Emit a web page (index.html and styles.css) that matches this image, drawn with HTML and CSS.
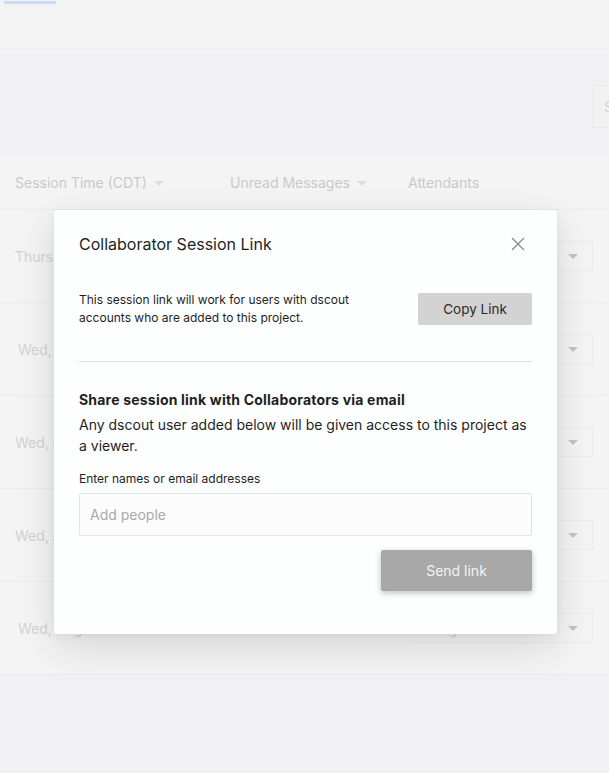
FILE: index.html
```html
<!DOCTYPE html>
<html>

<head>
    <meta charset="UTF-8">
    <title>Sessions</title>
    <link rel="stylesheet" href="styles.css">
</head>

<body>
    <div id="topBar">
        <div class="tab"></div>
    </div>

    <div id="toolBar">
        <button type="button" class="ghostButton">Schedule session</button>
    </div>

    <div id="sessionTable">
        <div class="tableHead">
            <div class="colTime">Session Time (CDT) <span class="caret"></span></div>
            <div class="colUnread">Unread Messages <span class="caret"></span></div>
            <div class="colAttend">Attendants</div>
        </div>
        <div class="tableRow">
            <div class="colTime">Thurs, Aug 15</div>
            <div class="colUnread"></div>
            <div class="colAttend"><div class="select">Assign <span class="caret"></span></div></div>
        </div>
        <div class="tableRow">
            <div class="colTime wed">Wed, July 31</div>
            <div class="colUnread"></div>
            <div class="colAttend"><div class="select">Assign <span class="caret"></span></div></div>
        </div>
        <div class="tableRow">
            <div class="colTime">Wed, Aug 14</div>
            <div class="colUnread"></div>
            <div class="colAttend"><div class="select">Assign <span class="caret"></span></div></div>
        </div>
        <div class="tableRow">
            <div class="colTime">Wed, Aug 14</div>
            <div class="colUnread"></div>
            <div class="colAttend"><div class="select">Assign <span class="caret"></span></div></div>
        </div>
        <div class="tableRow">
            <div class="colTime wed">Wed, Aug 7</div>
            <div class="colUnread"></div>
            <div class="colAttend"><div class="select">Assign <span class="caret"></span></div></div>
        </div>
    </div>

    <div id="linkModal">
        <div class="modalHead">
            <h2>Collaborator Session Link</h2>
            <button type="button" class="closeButton">
                <svg width="14" height="14" viewBox="0 0 14 14">
                    <path d="M1 1L13 13M13 1L1 13" stroke="#8a8a8a" stroke-width="1.3" fill="none"/>
                </svg>
            </button>
        </div>

        <div class="copyRow">
            <p>This session link will work for users with dscout<br>accounts who are added to this project.</p>
            <button type="button" class="copyButton">Copy Link</button>
        </div>

        <hr>

        <h3>Share session link with Collaborators via email</h3>
        <p class="shareText">Any dscout user added below will be given access to this project as a viewer.</p>

        <label for="people">Enter names or email addresses</label>
        <input type="text" id="people" placeholder="Add people">

        <div class="sendRow">
            <button type="button" class="sendButton">Send link</button>
        </div>
    </div>
</body>

</html>
```

FILE: styles.css
```css
body {
    margin: 0;
    position: relative;
    overflow: hidden;
    background-color: #f1f1f3;
    font-family: Inter, "Liberation Sans", Arial, sans-serif;
}

#topBar {
    height: 53px;
    background-color: #f3f3f4;
}

#topBar .tab {
    width: 52px;
    height: 3px;
    margin-left: 4px;
    position: relative;
    top: 1px;
    background-color: #c9dcf4;
}

#toolBar {
    display: flex;
    height: 102px;
    padding-top: 32px;
    box-sizing: border-box;
    background-color: #f1f1f3;
}

.ghostButton {
    margin-left: auto;
    margin-right: -120px;
    width: 136px;
    height: 43px;
    padding: 0 0 0 10px;
    text-align: left;
    border: 1px solid #e9e8e9;
    border-radius: 2px;
    background-color: #f3f2f3;
    color: #d2d2d2;
    font-family: inherit;
    font-size: 14px;
}

#sessionTable {
    background-color: #f4f4f5;
}

.tableHead,
.tableRow {
    display: flex;
    align-items: center;
    border-bottom: 1px solid #ebebed;
    color: #c9c9cb;
    font-size: 14px;
}

.tableHead {
    height: 54px;
}

.tableRow {
    height: 92px;
    color: #d3d3d5;
}

.colTime {
    width: 215px;
    padding-left: 15px;
    white-space: nowrap;
}

.colTime.wed {
    width: 212px;
    padding-left: 18px;
}

.colUnread {
    width: 178px;
}

.colAttend {
    flex: 1;
}

.caret {
    display: inline-block;
    width: 0;
    height: 0;
    margin-left: 3px;
    vertical-align: middle;
    border-left: 5px solid transparent;
    border-right: 5px solid transparent;
    border-top: 5px solid #dcdcde;
}

.select {
    display: flex;
    align-items: center;
    width: 183px;
    height: 30px;
    margin-left: 2px;
    padding: 0 14px 0 10px;
    box-sizing: border-box;
    border: 1px solid #ebebed;
    color: #d3d3d5;
}

.select .caret {
    margin-left: auto;
    border-top-color: #c4c4c6;
}

#linkModal {
    position: absolute;
    top: 210px;
    left: 54px;
    width: 503px;
    height: 424px;
    padding: 24px 25px 0;
    box-sizing: border-box;
    border-radius: 4px;
    background-color: #fdfefe;
    box-shadow: 0 12px 40px rgba(0, 0, 0, 0.13), 0 2px 8px rgba(0, 0, 0, 0.05);
    color: #1f1f1f;
}

.modalHead {
    display: flex;
    align-items: center;
    justify-content: space-between;
    height: 20px;
}

.modalHead h2 {
    margin: 0;
    font-size: 16px;
    font-weight: normal;
    line-height: 20px;
}

.closeButton {
    display: flex;
    margin-right: 7px;
    padding: 0;
    border: none;
    background: none;
}

.copyRow {
    display: flex;
    align-items: center;
    justify-content: space-between;
    margin-top: 37px;
}

.copyRow p {
    margin: 0;
    font-size: 12px;
    line-height: 18px;
}

.copyButton {
    width: 114px;
    height: 32px;
    border: none;
    border-radius: 2px;
    background-color: #d3d3d3;
    color: #2b2b2b;
    font-family: inherit;
    font-size: 13.5px;
}

hr {
    margin: 34px 0 0;
    border: none;
    border-top: 1px solid #dfdfdf;
}

h3 {
    margin: 28px 0 0;
    font-size: 14px;
    font-weight: 700;
    letter-spacing: 0.2px;
    line-height: 20px;
}

.shareText {
    margin: 4px 0 0;
    font-size: 14px;
    line-height: 21px;
}

label {
    display: block;
    margin-top: 15px;
    font-size: 12px;
    line-height: 16px;
}

#people {
    display: block;
    width: 100%;
    height: 43px;
    margin-top: 6px;
    padding: 0 10px;
    box-sizing: border-box;
    border: 1px solid #e4e4e4;
    border-radius: 2px;
    background-color: #fdfcfc;
    font-family: inherit;
    font-size: 14px;
}

#people::placeholder {
    color: #a9a9a9;
}

.sendRow {
    display: flex;
    justify-content: flex-end;
    margin-top: 14px;
}

.sendButton {
    width: 151px;
    height: 41px;
    border: none;
    border-radius: 2px;
    background-color: #a8a8a8;
    color: #f3f3f3;
    font-family: inherit;
    font-size: 14px;
    box-shadow: 0 2px 6px rgba(0, 0, 0, 0.25);
}
```
